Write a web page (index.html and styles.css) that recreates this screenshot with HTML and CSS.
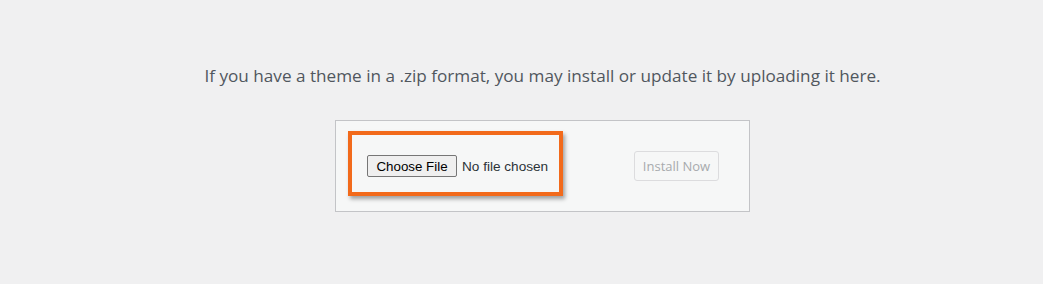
FILE: index.html
```html
<!DOCTYPE html>
<html lang="en">
<head>
<meta charset="utf-8">
<title>Upload Theme</title>
<link rel="stylesheet" href="styles.css">
</head>
<body>
<div class="wrap">
  <p class="install-help">If you have a theme in a .zip format, you may install or update it by uploading it here.</p>
  <form class="upload-form">
    <span class="highlight">
      <button type="button" class="file-btn">Choose File</button>
      <span class="file-name">No file chosen</span>
    </span>
    <button type="button" class="install-btn" disabled>Install Now</button>
  </form>
</div>
</body>
</html>
```
FILE: styles.css
```css
html, body {
  margin: 0;
  padding: 0;
  background: #f0f0f1;
  height: 100%;
}
.wrap {
  padding-left: 42px;
  display: flex;
  flex-direction: column;
  align-items: center;
  font-family: "Open Sans", "Noto Sans", sans-serif;
}
.install-help {
  margin: 0;
  padding-top: 63px;
  font-size: 17.15px;
  line-height: 26px;
  color: #50575e;
}
.upload-form {
  margin-top: 31px;
  box-sizing: border-box;
  width: 415px;
  height: 92px;
  display: flex;
  align-items: center;
  justify-content: space-between;
  padding: 0 30px 0 12px;
  background: #f6f7f7;
  border: 1px solid #c3c4c7;
}
.highlight {
  box-sizing: border-box;
  display: flex;
  align-items: center;
  width: 215px;
  height: 65px;
  padding: 5px 0 0 15px;
  margin-bottom: 5px;
  border: 4px solid #f26a1b;
  box-shadow: 2px 3px 4px rgba(0, 0, 0, 0.35);
}
.file-btn {
  box-sizing: border-box;
  height: 22px;
  width: 90px;
  padding: 0;
  font-family: "Liberation Sans", Arial, sans-serif;
  font-size: 13.33px;
  color: #000;
  background: #efefef;
  border: 1px solid #767676;
  border-radius: 2px;
}
.file-name {
  margin-left: 5px;
  font-family: "Liberation Sans", Arial, sans-serif;
  font-size: 13.6px;
  color: #2c3338;
}
.install-btn {
  box-sizing: border-box;
  width: 85px;
  height: 30px;
  padding: 0;
  font-family: "Open Sans", "Noto Sans", sans-serif;
  font-size: 13px;
  color: #a7aaad;
  background: #f6f7f7;
  border: 1px solid #dcdcde;
  border-radius: 3px;
}
```
